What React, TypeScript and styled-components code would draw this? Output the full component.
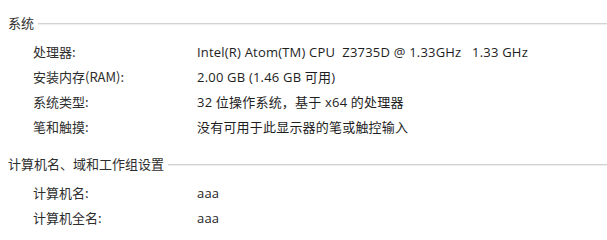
import React from 'react'
import styled, { createGlobalStyle } from 'styled-components'

const GlobalStyle = createGlobalStyle`
  html, body {
    margin: 0;
    padding: 0;
    background: #ffffff;
  }
  body {
    font-family: "Open Sans", "Noto Sans CJK SC", sans-serif;
    font-size: 13px;
    color: #262626;
  }
`

const Page = styled.div`
  width: 607px;
  height: 232px;
  overflow: hidden;
  padding: 10px 0 0 8px;
  box-sizing: border-box;
  display: flex;
  flex-direction: column;
  gap: 12px;
`

const Section = styled.section`
  display: flex;
  flex-direction: column;
  gap: 4px;
`

const Header = styled.div`
  display: flex;
  align-items: center;
  height: 25px;
  gap: 4px;
`

const HeaderText = styled.span`
  font-family: "Noto Sans CJK SC", sans-serif;
  font-size: 13px;
  color: #2e2e2e;
`

const Rule = styled.div`
  flex: 1;
  height: 0;
  margin-top: 2px;
  border-top: 1px solid #d2d2d2;
  border-bottom: 1px solid #eeeeee;
`

const List = styled.dl`
  margin: 0;
  padding-left: 25px;
  display: grid;
  grid-template-columns: 164px 1fr;
  grid-auto-rows: 25px;
  align-items: center;
`

const Label = styled.dt`
  font-family: "Noto Sans CJK SC", sans-serif;
  font-size: 13px;
  color: #2e2e2e;
`

const Value = styled.dd`
  margin: 0;
  font-family: "Open Sans", "Noto Sans CJK SC", sans-serif;
  font-size: 13px;
  letter-spacing: 0.2px;
  color: #1e1e1e;
  white-space: pre;
`

type Row = { label: string; value: string }

const system: Row[] = [
  { label: '处理器:', value: 'Intel(R) Atom(TM) CPU  Z3735D @ 1.33GHz   1.33 GHz' },
  { label: '安装内存(RAM):', value: '2.00 GB (1.46 GB 可用)' },
  { label: '系统类型:', value: '32 位操作系统，基于 x64 的处理器' },
  { label: '笔和触摸:', value: '没有可用于此显示器的笔或触控输入' },
]

const computer: Row[] = [
  { label: '计算机名:', value: 'aaa' },
  { label: '计算机全名:', value: 'aaa' },
]

const Group = ({ title, rows }: { title: string; rows: Row[] }) => (
  <Section>
    <Header>
      <HeaderText>{title}</HeaderText>
      <Rule />
    </Header>
    <List>
      {rows.map((r) => (
        <React.Fragment key={r.label}>
          <Label>{r.label}</Label>
          <Value>{r.value}</Value>
        </React.Fragment>
      ))}
    </List>
  </Section>
)

export default function App() {
  return (
    <>
      <GlobalStyle />
      <Page>
        <Group title="系统" rows={system} />
        <Group title="计算机名、域和工作组设置" rows={computer} />
      </Page>
    </>
  )
}
